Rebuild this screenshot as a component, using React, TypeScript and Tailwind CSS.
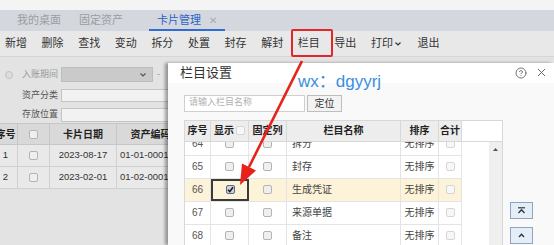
import { CircleHelp, X } from 'lucide-react';

function Cb({ checked = false, light = false }: { checked?: boolean; light?: boolean }) {
  return (
    <span
      className={`inline-flex h-[9px] w-[9px] items-center justify-center rounded-[2px] border ${
        checked
          ? 'border-[#5a6a80] bg-[#c9d3e2]'
          : light
          ? 'border-[#d6d6d6] bg-[#f7f7f7]'
          : 'border-[#b4b4b4] bg-[#efefef]'
      }`}
    >
      {checked && (
        <svg width="7" height="7" viewBox="0 0 7 7">
          <path d="M1 3.8 L2.8 5.6 L6 1.2" stroke="#1a1a1a" strokeWidth="1.6" fill="none" />
        </svg>
      )}
    </span>
  );
}

const tools = ['新增', '删除', '查找', '变动', '拆分', '处置', '封存', '解封'];

const rows = [
  { no: '64', name: '拆分', sort: '无排序' },
  { no: '65', name: '封存', sort: '无排序' },
  { no: '66', name: '生成凭证', sort: '无排序', on: true },
  { no: '67', name: '来源单据', sort: '无排序' },
  { no: '68', name: '备注', sort: '无排序' },
];

export default function App() {
  return (
    <div className="relative h-[245px] w-[554px] overflow-hidden bg-[#e3e3e3] font-['Liberation_Sans','Noto_Sans_CJK_SC',sans-serif] text-[#333]">
      <div className="h-[10px] bg-[#f4f4f4]" />

      {/* tabs */}
      <div className="flex h-[21px] items-stretch bg-[#d4d8de] pl-[17px] text-[11px] text-[#9a9da2]">
        <span className="flex items-center">我的桌面</span>
        <span className="ml-[18px] flex items-center">固定资产</span>
        <span className="ml-[26px] flex items-center gap-[8px] border-b-2 border-[#2f6cd4] px-[8px] pt-[2px] text-[#2a63c9]">
          卡片管理
          <span className="text-[10px] text-[#a8abb0]">✕</span>
        </span>
      </div>

      {/* toolbar */}
      <div className="flex h-[26px] items-stretch gap-[14.6px] border-b border-[#d6d6d6] bg-[#e8e8e8] pl-[5px] text-[11px] text-[#333]">
        {tools.map((t) => (
          <span key={t} className="flex items-center">
            {t}
          </span>
        ))}
        <span className="relative flex items-center">
          栏目
          <span className="absolute bottom-[-1px] left-[-7px] right-[-13px] top-[-2px] rounded-[2px] border-2 border-[#e2262b]" />
        </span>
        <span className="flex items-center">导出</span>
        <span className="flex items-center gap-[2px]">
          打印
          <svg width="6" height="4" viewBox="0 0 6 4">
            <path d="M0.5 0.5 L3 3 L5.5 0.5" stroke="#333" strokeWidth="1.2" fill="none" />
          </svg>
        </span>
        <span className="ml-[2px] flex items-center">退出</span>
      </div>

      {/* page body */}
      <div className="relative h-[188px] pt-[10px]">
        <div className="flex h-[15px] items-center">
          <span className="ml-[5px] h-[8px] w-[8px] rounded-full border border-[#c2c2c2] bg-[#dcdcdc]" />
          <span className="ml-[7px] w-[38px] text-right text-[9px] text-[#999]">入账期间</span>
          <div className="ml-[3px] flex h-[15px] w-[92px] items-center justify-end border border-[#bdbdbd] bg-[#cacaca]">
            <span className="flex h-full w-[18px] items-center justify-center">
              <svg width="6" height="4" viewBox="0 0 6 4">
                <path d="M0.5 0.5 L3 3 L5.5 0.5" stroke="#555" strokeWidth="1.2" fill="none" />
              </svg>
            </span>
          </div>
          <span className="ml-[4px] text-[9px] text-[#999]">-</span>
        </div>
        <div className="mt-[7px] flex h-[13px] items-center">
          <span className="ml-[20px] w-[38px] text-right text-[9px] text-[#555]">资产分类</span>
          <div className="ml-[3px] h-[13px] w-[120px] border border-[#c4c4c4] bg-[#f2f2f2]" />
        </div>
        <div className="mt-[6px] flex h-[14px] items-center">
          <span className="ml-[20px] w-[38px] text-right text-[9px] text-[#555]">存放位置</span>
          <div className="ml-[3px] h-[14px] w-[120px] border border-[#c4c4c4] bg-[#f2f2f2]" />
        </div>

        {/* list behind the dialog */}
        <div className="ml-[-6px] mt-[1px] w-[190px] text-[10px]">
          <div className="grid h-[22px] grid-cols-[24px_32px_67px_67px] border-y border-[#c6c6c6] bg-[#d9d9d9] font-bold text-[#222]">
            <span className="flex items-center justify-center border-r border-[#c6c6c6]">序号</span>
            <span className="flex items-center justify-center border-r border-[#c6c6c6]">
              <Cb />
            </span>
            <span className="flex items-center justify-center border-r border-[#c6c6c6]">卡片日期</span>
            <span className="flex items-center justify-center">资产编码</span>
          </div>
          {[
            ['1', '2023-08-17', '01-01-0001'],
            ['2', '2023-02-01', '01-02-0001'],
          ].map(([n, d, c]) => (
            <div
              key={n}
              className="grid h-[22px] grid-cols-[24px_32px_67px_67px] border-b border-[#d0d0d0] bg-[#e9e9e9] text-[9.5px] text-[#333]"
            >
              <span className="flex items-center justify-center border-r border-[#d0d0d0]">{n}</span>
              <span className="flex items-center justify-center border-r border-[#d0d0d0]">
                <Cb />
              </span>
              <span className="flex items-center justify-center border-r border-[#d0d0d0]">{d}</span>
              <span className="flex items-center pl-[3px]">{c}</span>
            </div>
          ))}
        </div>

        {/* dialog */}
        <div className="absolute bottom-0 left-[168px] right-0 top-[6px] flex flex-col bg-white shadow-[-3px_0_3px_rgba(0,0,0,0.35)]">
          <div className="flex h-[27px] items-center justify-between pl-[12px] pr-[6px]">
            <span className="text-[13px] text-[#333]">栏目设置</span>
            <div className="flex items-center gap-[8px] text-[#666]">
              <CircleHelp size={12} strokeWidth={1.8} />
              <X size={13} strokeWidth={1.8} />
            </div>
          </div>
          <div className="flex flex-1 flex-col bg-[#f9f9f9] pl-[16px] pt-[12px]">
            <div className="flex h-[17px] gap-[2px]">
              <div className="flex w-[121px] items-center border border-[#cfcfcf] bg-white pl-[4px] text-[9px] text-[#b0b0b0]">
                请输入栏目名称
              </div>
              <div className="flex w-[35px] items-center justify-center border border-[#bdbdbd] bg-[#f3f3f3] text-[10px] text-[#333]">
                定位
              </div>
            </div>

            <div className="mt-[8px] flex flex-1 gap-[7px]">
              <div className="flex w-[319px] flex-col border border-[#d8d8d8] bg-white text-[10px]">
                <div className="flex h-[21px] border-b border-[#d8d8d8]">
                  <div className="grid w-[277px] grid-cols-[26px_38px_38px_114px_38px_23px] bg-[#ededed] font-bold text-[#222]">
                    <span className="flex items-center justify-center border-r border-[#d8d8d8]">序号</span>
                    <span className="flex items-center justify-center gap-[2px] border-r border-[#d8d8d8]">
                      显示 <Cb light />
                    </span>
                    <span className="flex items-center justify-center border-r border-[#d8d8d8]">固定列</span>
                    <span className="flex items-center justify-center border-r border-[#d8d8d8]">栏目名称</span>
                    <span className="flex items-center justify-center border-r border-[#d8d8d8]">排序</span>
                    <span className="flex items-center justify-center border-r border-[#d8d8d8]">合计</span>
                  </div>
                </div>
                <div className="flex flex-1 overflow-hidden">
                  <div className="w-[277px] overflow-hidden">
                    <div className="mt-[-9px]">
                      {rows.map((r) => (
                        <div
                          key={r.no}
                          className={`grid h-[23px] grid-cols-[26px_38px_38px_114px_38px_23px] border-b border-[#e4e4e4] text-[#444] ${
                            r.on ? 'bg-[#fcf3d8]' : 'bg-white'
                          }`}
                        >
                          <span className="flex items-center justify-center border-r border-[#e4e4e4] text-[#555]">{r.no}</span>
                          <span
                            className={`flex items-center justify-center ${
                              r.on ? 'border-2 border-[#3a3a3a]' : 'border-r border-[#e4e4e4]'
                            }`}
                          >
                            <Cb checked={r.on} />
                          </span>
                          <span className="flex items-center justify-center border-r border-[#e4e4e4]">
                            <Cb />
                          </span>
                          <span className="flex items-center border-r border-[#e4e4e4] pl-[5px]">{r.name}</span>
                          <span className="flex items-center justify-center border-r border-[#e4e4e4]">{r.sort}</span>
                          <span className="flex items-center justify-center border-r border-[#e4e4e4]">
                            <Cb light />
                          </span>
                        </div>
                      ))}
                    </div>
                  </div>
                  <div className="flex-1" />
                  <div className="flex w-[13px] justify-center bg-[#efefef] pt-[6px]">
                    <svg width="5" height="3" viewBox="0 0 5 3">
                      <path d="M0 3 L2.5 0 L5 3 Z" fill="#555" />
                    </svg>
                  </div>
                </div>
              </div>

              <div className="flex flex-col gap-[8px] pt-[82px]">
                <div className="flex h-[17px] w-[23px] items-center justify-center border border-[#8ea6bf] bg-[#e3eef9]">
                  <svg width="9" height="7" viewBox="0 0 9 7">
                    <path d="M1 0.8 L8 0.8" stroke="#333" strokeWidth="1.2" />
                    <path d="M1.5 6 L4.5 2.8 L7.5 6" stroke="#333" strokeWidth="1.3" fill="none" />
                  </svg>
                </div>
                <div className="flex h-[17px] w-[23px] items-center justify-center border border-[#8ea6bf] bg-[#e3eef9]">
                  <svg width="7" height="5" viewBox="0 0 7 5">
                    <path d="M1 4 L3.5 1.2 L6 4" stroke="#333" strokeWidth="1.3" fill="none" />
                  </svg>
                </div>
              </div>
            </div>
          </div>
        </div>
      </div>

      {/* annotation */}
      <span className="absolute left-[298px] top-[73px] text-[17px] leading-none text-[#3b8fe0]">wx：dgyyrj</span>
      <svg className="pointer-events-none absolute left-0 top-0" width="554" height="245" viewBox="0 0 554 245">
        <line x1="302" y1="61" x2="249" y2="167" stroke="#e8211a" strokeWidth="2.6" />
        <polygon points="240,185 256,170.5 242,163.5" fill="#e8211a" />
      </svg>
    </div>
  );
}
